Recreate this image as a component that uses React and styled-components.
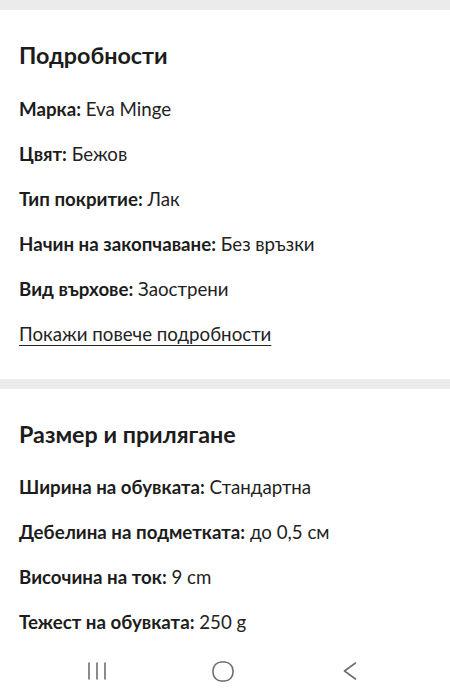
import React from "react";
import styled, { createGlobalStyle } from "styled-components";

const GlobalStyle = createGlobalStyle`
  html, body {
    margin: 0;
    padding: 0;
    background: #ffffff;
  }
  body {
    font-family: Lato, "Noto Sans", "Liberation Sans", sans-serif;
    color: #1e1e1e;
    -webkit-font-smoothing: antialiased;
  }
`;

const Page = styled.div`
  width: 450px;
  min-height: 700px;
  background: #ffffff;
  display: flex;
  flex-direction: column;
`;

const Divider = styled.div`
  height: 10px;
  background: #ebebeb;
  flex-shrink: 0;
`;

const Section = styled.section`
  padding: 31px 19px 33px;
  display: flex;
  flex-direction: column;
`;

const Title = styled.h2`
  margin: 0 0 ${(p) => p.$gap || 28}px;
  font-size: 23.3px;
  line-height: 28px;
  font-weight: 700;
  color: #1c1c1c;
`;

const List = styled.div`
  display: flex;
  flex-direction: column;
  gap: 21px;
`;

const Row = styled.div`
  font-size: 18.7px;
  line-height: 24px;
  color: #222222;
  white-space: nowrap;
`;

const Label = styled.span`
  font-weight: 700;
  color: #1c1c1c;
`;

const MoreLink = styled.a`
  align-self: flex-start;
  font-size: 18.7px;
  line-height: 24px;
  color: #222222;
  text-decoration: underline;
  text-decoration-thickness: 1px;
  text-underline-offset: 4px;
  cursor: pointer;
`;

const NavBar = styled.nav`
  position: fixed;
  left: 0;
  right: 0;
  bottom: 0;
  height: 52px;
  background: #ffffff;
  display: grid;
  grid-template-columns: repeat(3, 1fr);
  align-items: center;
  justify-items: center;
  padding-bottom: 6px;
  box-sizing: border-box;
`;

const NavIcon = styled.svg`
  display: block;
  color: #6e6e6e;
  transform: translateX(${(p) => p.$shift || 0}px);
`;

const details = [
  ["Марка", "Eva Minge"],
  ["Цвят", "Бежов"],
  ["Тип покритие", "Лак"],
  ["Начин на закопчаване", "Без връзки"],
  ["Вид върхове", "Заострени"],
];

const fit = [
  ["Ширина на обувката", "Стандартна"],
  ["Дебелина на подметката", "до 0,5 см"],
  ["Височина на ток", "9 cm"],
  ["Тежест на обувката", "250 g"],
];

function Spec({ label, value }) {
  return (
    <Row>
      <Label>{label}:</Label> {value}
    </Row>
  );
}

export default function App() {
  return (
    <>
      <GlobalStyle />
      <Page>
        <Divider />
        <Section>
          <Title>Подробности</Title>
          <List>
            {details.map(([l, v]) => (
              <Spec key={l} label={l} value={v} />
            ))}
            <MoreLink>Покажи повече подробности</MoreLink>
          </List>
        </Section>
        <Divider />
        <Section>
          <Title $gap={27}>Размер и прилягане</Title>
          <List>
            {fit.map(([l, v]) => (
              <Spec key={l} label={l} value={v} />
            ))}
          </List>
        </Section>
      </Page>
      <NavBar>
        <NavIcon $shift={22} width="20" height="18" viewBox="0 0 20 18" fill="none">
          <g stroke="currentColor" strokeWidth="1.6" strokeLinecap="round">
            <line x1="2" y1="1" x2="2" y2="17" />
            <line x1="10" y1="1" x2="10" y2="17" />
            <line x1="18" y1="1" x2="18" y2="17" />
          </g>
        </NavIcon>
        <NavIcon $shift={-2} width="22" height="21" viewBox="0 0 22 21" fill="none">
          <rect x="1" y="1" width="20" height="19" rx="8.5" stroke="currentColor" strokeWidth="1.6" />
        </NavIcon>
        <NavIcon $shift={-25} width="14" height="18" viewBox="0 0 14 18" fill="none">
          <polyline points="12.5,1 1.5,9 12.5,17" stroke="currentColor" strokeWidth="1.6" strokeLinecap="round" strokeLinejoin="round" />
        </NavIcon>
      </NavBar>
    </>
  );
}
